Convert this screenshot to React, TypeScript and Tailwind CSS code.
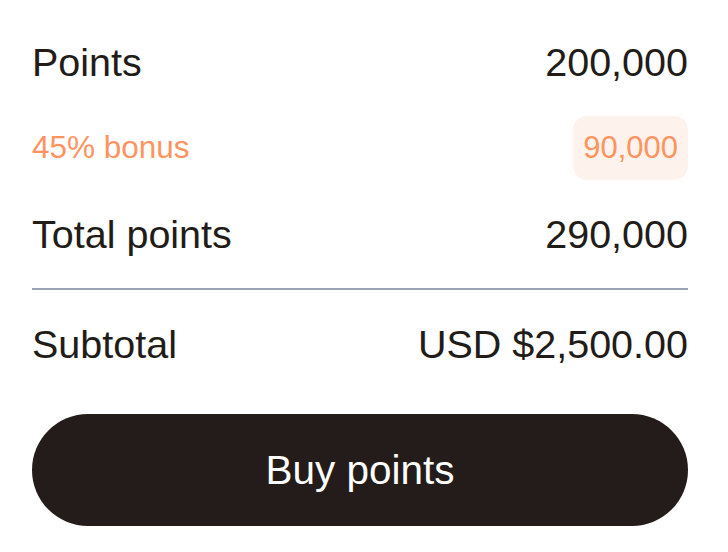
import React from 'react';

const rows = {
  points: '200,000',
  bonusLabel: '45% bonus',
  bonus: '90,000',
  total: '290,000',
  subtotal: 'USD $2,500.00',
};

const App: React.FC = () => {
  return (
    <div
      className="w-[728px] h-[552px] bg-white pl-8 pr-10 pt-[31px] text-[#221c19] flex flex-col"
      style={{ fontFamily: '"Liberation Sans", Arial, sans-serif' }}
    >
      <div className="h-16 flex items-center justify-between text-[39.5px]">
        <span>Points</span>
        <span>{rows.points}</span>
      </div>

      <div className="mt-[21px] h-16 flex items-center justify-between text-[31.5px] text-[#ff9460]">
        <span>{rows.bonusLabel}</span>
        <span className="h-16 flex items-center px-[10px] rounded-[14px] bg-[#fef3ec] text-[31px]">{rows.bonus}</span>
      </div>

      <div className="mt-[23px] h-16 flex items-center justify-between text-[39.5px]">
        <span>Total points</span>
        <span>{rows.total}</span>
      </div>

      <div className="mt-[21px] h-[2px] bg-[#9aa4b4]" />

      <div className="mt-[23px] h-16 flex items-center justify-between text-[39.5px]">
        <span>Subtotal</span>
        <span>{rows.subtotal}</span>
      </div>

      <button className="mt-[37px] h-28 w-full rounded-full bg-[#231c1a] text-white text-[40.5px]">
        Buy points
      </button>
    </div>
  );
};

export default App;
